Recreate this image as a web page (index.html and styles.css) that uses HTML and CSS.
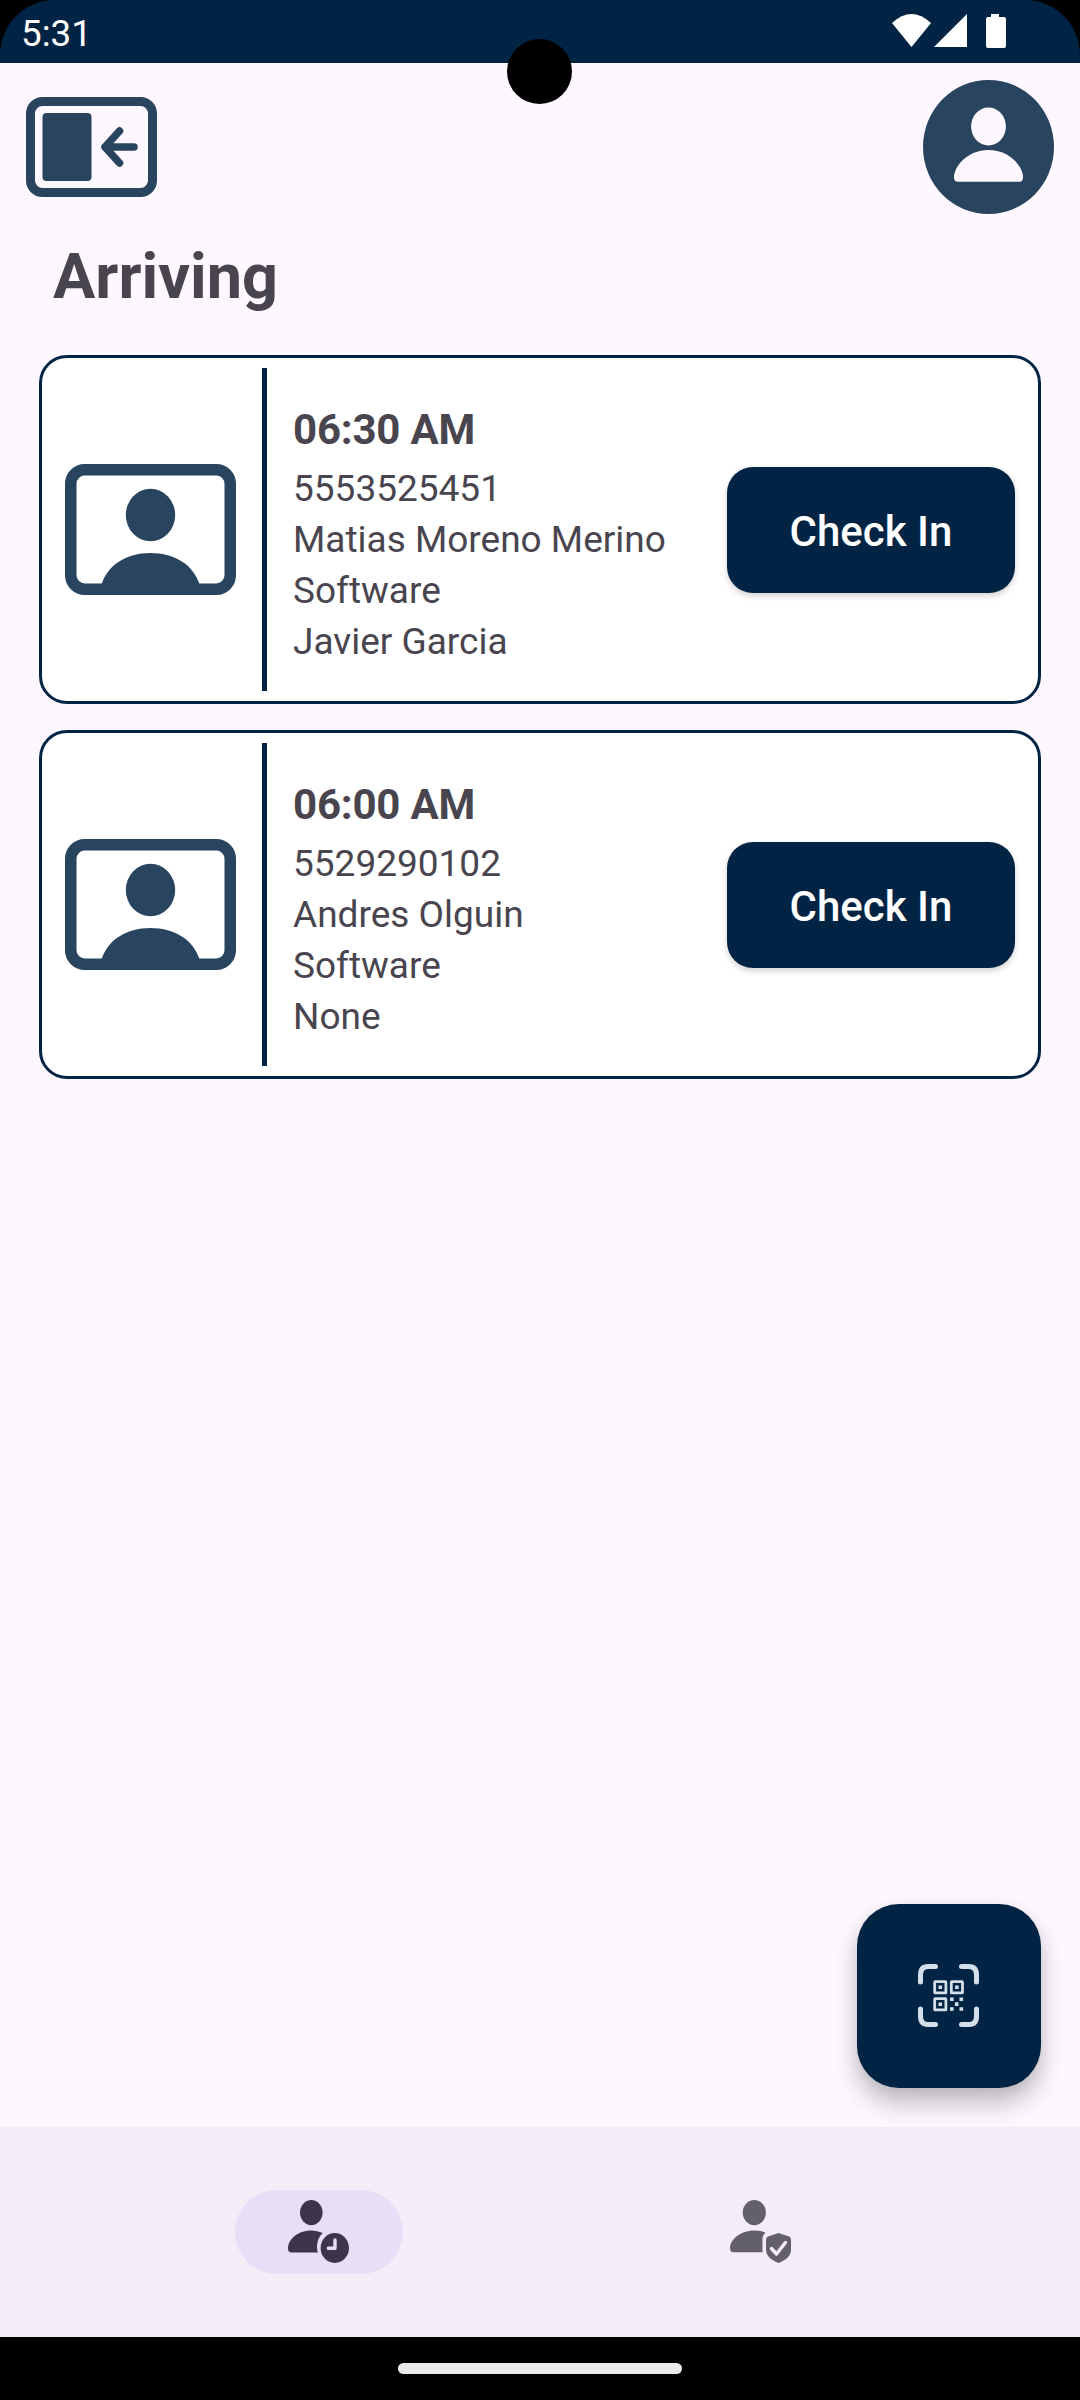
FILE: index.html
```html
<!DOCTYPE html>
<html lang="en">
<head>
<meta charset="UTF-8">
<meta name="viewport" content="width=device-width, initial-scale=1.0">
<title>Arriving</title>
<link rel="stylesheet" href="styles.css">
</head>
<body>
<div class="screen">
    <header class="status-bar">
        <div class="status-inner">
            <span class="clock">5:31</span>
            <svg class="status-icons" width="114" height="34" viewBox="0 0 114 34" fill="#fff">
                <path d="M0 9Q19.500-9 39 9L19.500 33Z"/>
                <path d="M42 33L75 0V33Z"/>
                <path d="M99 0h8v3h5q2 0 2 2v27q0 2-2 2h-16q-2 0-2-2V5q0-2 2-2h3z"/>
            </svg>
        </div>
    </header>
    <div class="camera"></div>

    <div class="top-bar">
        <button class="icon-button" aria-label="Menu">
            <svg width="131" height="100" viewBox="0 0 131 100">
                <rect x="4.500" y="4.500" width="122" height="91" rx="12" fill="none" stroke="#29445f" stroke-width="9"/>
                <rect x="16.500" y="16" width="49" height="68" rx="4" fill="#29445f"/>
                <path d="M108 50H79M93.500 34L79 50l14.500 16" fill="none" stroke="#29445f" stroke-width="7.500" stroke-linecap="round" stroke-linejoin="round"/>
            </svg>
        </button>
        <button class="icon-button" aria-label="Profile">
            <svg width="131" height="134" viewBox="0 0 131 134">
                <ellipse cx="65.500" cy="67" rx="65.500" ry="67" fill="#29445f"/>
                <ellipse cx="65.500" cy="46.500" rx="17.400" ry="19" fill="#fef7ff"/>
                <path d="M34.500 101.700Q31 101.700 31 97C31 87 44 70 65.500 70S100 87 100 97Q100 101.700 96.500 101.700Z" fill="#fef7ff"/>
            </svg>
        </button>
    </div>

    <h1>Arriving</h1>

    <main class="visit-list">
        <div class="card">
            <svg class="badge" width="171" height="131" viewBox="0 0 171 131">
                <rect x="5.750" y="5.750" width="159.500" height="119.500" rx="14" fill="none" stroke="#29445f" stroke-width="11.500"/>
                <ellipse cx="85.500" cy="51" rx="24.700" ry="26.200" fill="#29445f"/>
                <path d="M36 122C42 101 61 89 85.500 89S129 101 135 122Z" fill="#29445f"/>
            </svg>
            <div class="divider"></div>
            <div class="details">
                <strong>06:30 AM</strong>
                <span>5553525451</span>
                <span>Matias Moreno Merino</span>
                <span>Software</span>
                <span>Javier Garcia</span>
            </div>
            <button class="check-in">Check In</button>
        </div>
        <div class="card">
            <svg class="badge" width="171" height="131" viewBox="0 0 171 131">
                <rect x="5.750" y="5.750" width="159.500" height="119.500" rx="14" fill="none" stroke="#29445f" stroke-width="11.500"/>
                <ellipse cx="85.500" cy="51" rx="24.700" ry="26.200" fill="#29445f"/>
                <path d="M36 122C42 101 61 89 85.500 89S129 101 135 122Z" fill="#29445f"/>
            </svg>
            <div class="divider"></div>
            <div class="details">
                <strong>06:00 AM</strong>
                <span>5529290102</span>
                <span>Andres Olguin</span>
                <span>Software</span>
                <span>None</span>
            </div>
            <button class="check-in">Check In</button>
        </div>
    </main>

    <button class="fab" aria-label="Scan code">
        <svg width="62" height="64" viewBox="0 0 62 64">
            <g fill="none" stroke="#d5dfe9" stroke-width="5" stroke-linecap="round">
                <path d="M2.500 18V11Q2.500 2.500 10 2.500H17.500"/>
                <path d="M43.500 2.500H51Q58.500 2.500 58.500 11V18"/>
                <path d="M2.500 45V52Q2.500 60.500 10 60.500H17.500"/>
                <path d="M43.500 60.500H51Q58.500 60.500 58.500 52V45"/>
            </g>
            <g fill="none" stroke="#d5dfe9" stroke-width="2.800">
                <rect x="16.700" y="17.700" width="11.200" height="11.200" rx=".5"/>
                <rect x="33.300" y="17.700" width="11.200" height="11.200" rx=".5"/>
                <rect x="16.700" y="34.700" width="11.200" height="11.200" rx=".5"/>
            </g>
            <path fill="#d5dfe9" d="M20.500 21.500h3.600v3.600h-3.600zM37.100 21.500h3.600v3.600h-3.600zM20.500 38.500h3.600v3.600h-3.600zM32 33.500h3.600v3.600H32zM41.500 33.500h3.600v3.600h-3.600zM36.900 38.300h3.600v3.600h-3.600zM32 43.200h3.600v3.600H32zM41.500 43.200h3.600v3.600h-3.600z"/>
        </svg>
    </button>

    <nav class="bottom-nav">
        <a class="nav-item active" href="#" aria-label="Arriving">
            <svg width="62" height="64" viewBox="0 0 62 64" fill="#3d364b">
                <ellipse cx="23.300" cy="12.600" rx="11.300" ry="12.600"/>
                <path d="M3.500 52.500Q0 52.500 0 48.500C0 40 9 30.500 23.500 30.500Q29.500 30.500 34.800 33C29.500 37.500 28 45.500 29.800 52.500Z"/>
                <ellipse cx="46.800" cy="48" rx="14.200" ry="15"/>
                <path d="M47 40V48.300H40.300" fill="none" stroke="#e8def8" stroke-width="3.400" stroke-linecap="round" stroke-linejoin="round"/>
            </svg>
        </a>
        <a class="nav-item" href="#" aria-label="Verified">
            <svg width="62" height="64" viewBox="0 0 62 64" fill="#64606b">
                <ellipse cx="24.300" cy="12.600" rx="11.600" ry="12.600"/>
                <path d="M3.500 52.200Q0 52.200 0 48C0 40 10 30.500 24.500 30.500Q30.500 30.500 35.500 32.500Q32.500 35 32.500 38.500V52.200Z"/>
                <path d="M48.500 33L59 36.500Q61 37.500 61 39.500V49.500C61 56.500 55 60.500 48.500 63C42 60.500 36 56.500 36 49.500V39.500Q36 37.500 38 36.500Z"/>
                <path d="M41.500 48.500L46.500 54L55.500 42.500" fill="none" stroke="#f3edf7" stroke-width="3.400" stroke-linecap="round" stroke-linejoin="round"/>
            </svg>
        </a>
    </nav>

    <footer class="gesture-bar">
        <div class="handle"></div>
    </footer>
</div>
</body>
</html>
```
FILE: styles.css
```css
body {
    margin: 0;
    background-color: #fef7ff;
    color: #49454f;
    font-family: Roboto, sans-serif;
}
.screen {
    position: relative;
    display: flex;
    flex-direction: column;
    width: 1080px;
    height: 2400px;
    overflow: hidden;
}
button {
    font-family: inherit;
    border: none;
    padding: 0;
    cursor: pointer;
}
svg {
    display: block;
    flex: none;
}
.status-bar {
    flex: none;
    height: 63px;
    background-color: #000;
}
.status-inner {
    display: flex;
    justify-content: space-between;
    height: 63px;
    box-sizing: border-box;
    padding: 14px 74px 0 21px;
    background-color: #022444;
    border-radius: 55px 55px 0 0;
}
.clock {
    color: #fff;
    font-size: 36.75px;
    line-height: 39px;
}
.camera {
    position: absolute;
    top: 39px;
    left: 507px;
    width: 65px;
    height: 65px;
    border-radius: 50%;
    background-color: #000;
}
.top-bar {
    display: flex;
    justify-content: space-between;
    align-items: center;
    height: 134px;
    padding: 17px 26px 0;
}
.icon-button {
    background: none;
}
h1 {
    margin: 25px 0 0 53px;
    height: 76px;
    font-size: 63px;
    line-height: 76px;
    font-weight: bold;
}
.visit-list {
    flex: 1;
    display: flex;
    flex-direction: column;
    gap: 26px;
    padding: 40px 39px 0;
}
.card {
    display: flex;
    align-items: center;
    height: 349px;
    box-sizing: border-box;
    padding: 10px 23px;
    background-color: #fff;
    border: 3px solid #022444;
    border-radius: 28px;
}
.divider {
    flex: none;
    width: 5px;
    height: 323px;
    margin: 0 26px;
    background-color: #022444;
}
.details {
    flex: 1;
    display: flex;
    flex-direction: column;
    padding-top: 6px;
    font-size: 37px;
    line-height: 51px;
}
.details strong {
    margin-bottom: 2px;
    font-size: 42px;
    line-height: 63px;
    letter-spacing: -0.2px;
}
.check-in {
    width: 288px;
    height: 126px;
    padding-top: 3px;
    background-color: #022444;
    color: #fff;
    font-size: 42px;
    font-weight: 500;
    border-radius: 26px;
    box-shadow: 0 3px 6px rgba(0,0,0,0.18);
}
.fab {
    display: flex;
    align-items: center;
    justify-content: center;
    align-self: flex-end;
    flex: none;
    width: 184px;
    height: 184px;
    margin: 0 39px 39px 0;
    background-color: #022444;
    border-radius: 42px;
    box-shadow: 0 16px 24px rgba(0,0,0,0.24), 0 2px 14px rgba(0,0,0,0.06);
}
.bottom-nav {
    display: flex;
    flex: none;
    justify-content: center;
    align-items: center;
    gap: 274px;
    height: 210px;
    position: relative;
    background-color: #f3edf7;
}
.nav-item {
    display: flex;
    align-items: center;
    justify-content: center;
    width: 168px;
    height: 84px;
    border-radius: 42px;
}
.nav-item.active {
    background-color: #e8def8;
}
.gesture-bar {
    display: flex;
    flex: none;
    align-items: center;
    justify-content: center;
    height: 63px;
    background-color: #000;
}
.handle {
    width: 284px;
    height: 11px;
    border-radius: 6px;
    background-color: #ebebeb;
}
```
